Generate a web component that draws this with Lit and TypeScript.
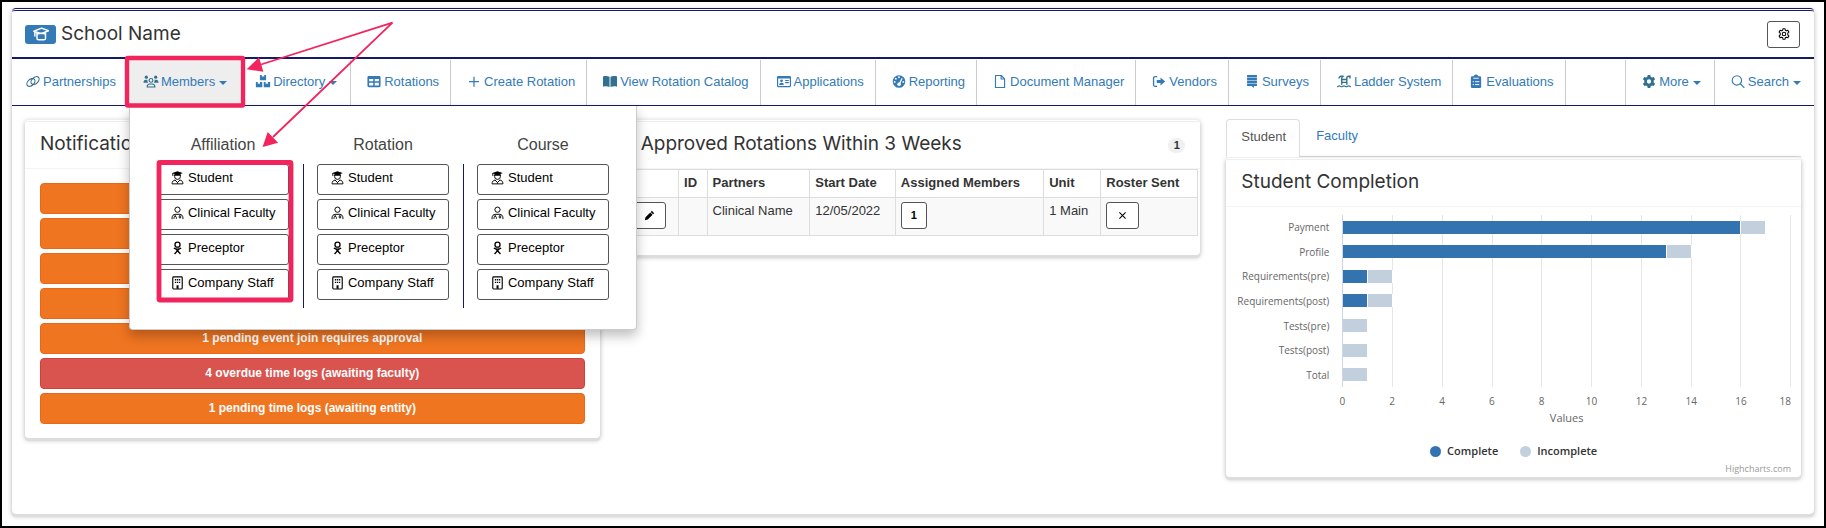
import { LitElement, html, svg, css, nothing } from "lit";
import { customElement, property, state } from "lit/decorators.js";

const icons: Record<string, unknown> = {
  link: svg`<g fill="none" stroke="currentColor" stroke-width="1.2"><ellipse cx="5.8" cy="9" rx="5" ry="3.3" transform="rotate(-42 5.8 9)"/><ellipse cx="10.2" cy="7" rx="5" ry="3.3" transform="rotate(-42 10.2 7)"/></g>`,
  members: svg`<g fill="currentColor"><circle cx="3" cy="3.4" r="1.7"/><circle cx="13" cy="3.4" r="1.7"/><path d="M0 9.2C0 7 1 6 2.6 6h1.6c-.3 1.200 0 2.300.8 3.200zM16 9.200C16 7 15 6 13.400 6h-1.600c.3 1.200 0 2.300-.8 3.200z"/></g><g fill="none" stroke="currentColor" stroke-width="1.200"><circle cx="8" cy="6.800" r="2"/><path d="M3.900 13.800c0-2 1.100-3.200 2.800-3.200h2.600c1.700 0 2.800 1.200 2.800 3.200z"/></g>`,
  boxes: svg`<path fill="currentColor" d="M4.700 1h2v2l1.300-.6L9.300 3V1h2v5.600H4.700zM.4 8.600h2v2l1.200-.6 1.200.6v-2h2.400v5.600H.4zM8.800 8.600h2v2l1.200-.6 1.200.6v-2h2.400v5.600H8.800z"/>`,
  table: svg`<path fill="currentColor" fill-rule="evenodd" d="M2.500 2h11A1.500 1.500 0 0 1 15 3.500v9a1.500 1.500 0 0 1-1.500 1.500h-11A1.500 1.500 0 0 1 1 12.500v-9A1.500 1.500 0 0 1 2.500 2zM2.800 5.200v2.600h4.400V5.200zm6 0v2.600h4.400V5.200zm-6 4.200v2.800h4.400V9.400zm6 0v2.800h4.400V9.400z"/>`,
  plus: svg`<path fill="none" stroke="currentColor" stroke-width="1.300" d="M8 3v10.500M2.700 8.200h10.600"/>`,
  book: svg`<path fill="currentColor" d="M.5 2.600C3 1.900 5.500 2 7.500 2.900v11C5.500 13 3 12.800.5 13.500zM8.500 2.900c2-.9 4.500-1 7-.3v10.900c-2.500-.7-5-.5-7 .4z"/>`,
  card: svg`<path fill="currentColor" fill-rule="evenodd" d="M2 2h12a1.500 1.500 0 0 1 1.500 1.500v9A1.500 1.500 0 0 1 14 14H2a1.500 1.500 0 0 1-1.500-1.500v-9A1.500 1.500 0 0 1 2 2zM1.800 4.800v7.900h12.400V4.800z"/><circle cx="5.300" cy="7.300" r="1.500" fill="currentColor"/><path fill="currentColor" d="M2.900 11.700c0-1.600.8-2.300 2.400-2.300s2.400.7 2.400 2.300zM9.200 6.300h3.900v1.200H9.200zM9.200 8.600h3.900v1.200H9.200z"/>`,
  gauge: svg`<circle cx="8" cy="8" r="6.700" fill="currentColor"/><g fill="#fff"><circle cx="8" cy="3.500" r="1"/><circle cx="4.600" cy="5" r="1"/><circle cx="3.400" cy="8.400" r="1"/><circle cx="12.600" cy="8.400" r="1"/><circle cx="8" cy="11" r="1.900"/><path d="M7.600 10.500 10.900 4.300l1 .5L9 11.200z"/></g>`,
  file: svg`<path fill="none" stroke="currentColor" stroke-width="1.200" stroke-linejoin="round" d="M3.200 1.600h6.200l3.500 3.500v9.300H3.200zM9.200 1.800v3.500h3.500"/>`,
  exit: svg`<path fill="none" stroke="currentColor" stroke-width="1.400" d="M6 2.700H3.800a1.600 1.600 0 0 0-1.600 1.600v7.200a1.600 1.600 0 0 0 1.600 1.600H6"/><path fill="currentColor" d="M5.600 6.400h4V3.600L14.600 8l-5 4.300V9.500h-4z"/>`,
  stack: svg`<path fill="currentColor" d="M2.800 1h10.400v2.200H2.800zM2.800 4.200h10.400v2.200H2.800zM2.800 7.400h10.400v2.200H2.800zM2.800 10.600h10.400v2.200H10v2.200l-2.500-2.200H2.800z"/><path fill="currentColor" opacity=".5" d="M2.800 1h10.400v11.800H2.800z"/>`,
  ladder: svg`<g fill="none" stroke="currentColor" stroke-width="1.500"><path d="M2.600 4.800A2.300 2.300 0 0 1 5 2.400h1.600M5.600 11.500V4.700A2.200 2.200 0 0 1 7.800 2.400M11 11.500V4.600a2.200 2.200 0 0 1 2.200-2.200h1.200v2.300M5.600 5.900H11M5.600 8.900H11"/><path stroke-width="1.200" d="M.6 13.600c1.300 0 1.300-.9 2.500-.9s1.200.9 2.400.9 1.300-.9 2.500-.9 1.200.9 2.500.9 1.200-.9 2.400-.9 1.200.9 2.500.9"/></g>`,
  clipboard: svg`<path fill="currentColor" d="M5.500 2.400A2.500 2.500 0 0 1 8 .6a2.500 2.500 0 0 1 2.500 1.800h1.700a1.300 1.300 0 0 1 1.300 1.300v10a1.300 1.300 0 0 1-1.300 1.300H3.800a1.300 1.300 0 0 1-1.300-1.300v-10a1.300 1.300 0 0 1 1.300-1.300z"/><path stroke="#fff" stroke-width="1" d="M5.200 4.500h5.600M4.500 8.200h1.300M7 8.200h4.500M4.500 11.300h1.300M7 11.300h4.500"/>`,
  gear: svg`<path fill="currentColor" fill-rule="evenodd" d="m6.600 1-.4 2-1.300.8-2-.7L1.500 5.500 3 6.900v2.200l-1.500 1.400 1.400 2.400 2-.7 1.300.8.4 2h2.800l.4-2 1.300-.8 2 .7 1.400-2.400L13 9.100V6.900l1.500-1.400-1.400-2.400-2 .7L9.800 3l-.4-2zM8 5.700a2.300 2.300 0 1 1 0 4.600 2.300 2.300 0 0 1 0-4.600z"/>`,
  gearThin: svg`<g fill="none" stroke="currentColor" stroke-width="1.400" stroke-linejoin="round"><path d="m6.600 1-.4 2-1.300.8-2-.7L1.500 5.500 3 6.900v2.200l-1.500 1.400 1.400 2.400 2-.7 1.300.8.4 2h2.800l.4-2 1.300-.8 2 .7 1.400-2.400L13 9.100V6.900l1.500-1.400-1.400-2.400-2 .7L9.800 3l-.4-2z"/><circle cx="8" cy="8" r="2.300"/></g>`,
  search: svg`<g fill="none" stroke="currentColor" stroke-width="1.200"><circle cx="6.800" cy="6.800" r="5"/><path d="m10.400 10.400 4.400 4.400"/></g>`,
  cap: svg`<g fill="none" stroke="currentColor" stroke-width="1.500" stroke-linejoin="round"><path d="M.8 5.200 8.600 2.100l6.900 2.600-7.300 2.900z"/><path d="M4 6.800v5.700c0 .9.600 1.300 1.500 1.300h5.300c1.100 0 1.700-.5 1.700-1.400V6.600M4.200 8c2.300-.9 6-.9 8.200.1M1.900 5.900v4.600"/></g>`,
  student: svg`<path fill="currentColor" d="M2 2.400 8 .4l6 2-2.500.9v2H4.500v-2l-1.300-.4v2.700h-1z"/><g fill="none" stroke="currentColor" stroke-width="1.100"><path d="M4.700 4.500v1.800a3.300 3.300 0 0 0 6.600 0V4.500M5.200 10.300C3 10.800 1.800 12 1.800 14.700h12.400c0-2.700-1.200-3.900-3.400-4.400L8 13.300zM8 13v1.500"/></g>`,
  faculty: svg`<g fill="none" stroke="currentColor" stroke-width="1.100"><circle cx="8" cy="4.200" r="3"/><path d="M1.800 15v-1.500c0-2.500 1.600-4 4-4h4.400c2.400 0 4 1.500 4 4V15M5.300 9.700v1.800M10.700 9.700v1.600M4 14.600v-1.400a1.300 1.300 0 0 1 2.700 0v1.400"/><circle cx="10.800" cy="12.600" r="1.100"/></g>`,
  preceptor: svg`<g fill="none" stroke="currentColor" stroke-width="1.500"><circle cx="8" cy="4.200" r="2.900"/><path d="M3.800 8.200c2.800 1.500 5.600 1.500 8.400 0M4.600 14.900 8 11.200l3.400 3.700M6.300 9.200 8 11.400l1.700-2.200"/></g>`,
  building: svg`<rect x="2.600" y="1" width="10.800" height="13.800" rx="1" fill="none" stroke="currentColor" stroke-width="1.300"/><path fill="currentColor" d="M5 3.500h1.500V5H5zM7.300 3.500h1.500V5H7.300zM9.600 3.500h1.500V5H9.600zM5 6.600h1.500v1.500H5zM7.300 6.600h1.500v1.500H7.300zM9.600 6.600h1.500v1.500H9.600zM6.900 10.500h2.300v4H6.900z"/>`,
  pencil: svg`<path fill="currentColor" d="m11.400 1.200 3.400 3.400-1.600 1.600-3.400-3.400zM9.100 3.500l3.400 3.400-7 7L1.200 15l1-4.500z"/>`,
  cross: svg`<path fill="none" stroke="currentColor" stroke-width="1.500" d="m3.500 3.500 9 9M12.500 3.500l-9 9"/>`,
};

const icon = (name: string, cls = "") =>
  html`<svg class="icon ${cls}" viewBox="0 0 16 16" aria-hidden="true">${icons[name]}</svg>`;

const base = css`
  * { box-sizing: border-box; }
  a { text-decoration: none; color: inherit; }
  button { font: inherit; color: inherit; background: none; border: 0; margin: 0; padding: 0; cursor: pointer; }
  h1, h2, h3 { margin: 0; font-weight: 400; }
  .icon { display: block; width: 16px; height: 16px; flex: none; }
  .btn { display: inline-flex; align-items: center; justify-content: center; border: 1px solid #555; border-radius: 3px; background: #fff; color: #000; }
`;

@customElement("members-menu")
class MembersMenu extends LitElement {
  static styles = [base, css`
    :host { display: grid; grid-template-columns: auto auto auto; background: #fff; border: 1px solid rgba(0, 0, 0, 0.2); border-top: 0; border-radius: 0 0 4px 4px; box-shadow: 0 6px 12px rgba(0, 0, 0, 0.25); padding: 28px 27px 21px; }
    h3 { width: 132px; font-size: 16px; line-height: 22px; color: #444; text-align: center; margin-bottom: 8px; }
    ul { list-style: none; margin: 0; padding: 0 0 8px; display: grid; gap: 4px; }
    .group:not(:last-child) ul { border-right: 1px solid #141a66; padding-right: 14px; margin-right: 13px; }
    .btn { width: 132px; height: 31px; justify-content: flex-start; gap: 3px; padding: 0 0 4px 12px; font-size: 13px; }
    .icon { width: 15px; height: 14px; }
  `];
  private entries = [["student", "Student"], ["faculty", "Clinical Faculty"], ["preceptor", "Preceptor"], ["building", "Company Staff"]];
  render() {
    return ["Affiliation", "Rotation", "Course"].map((group) => html`
      <section class="group">
        <h3>${group}</h3>
        <ul>${this.entries.map(([i, label]) => html`<li><a class="btn" href="#">${icon(i)}${label}</a></li>`)}</ul>
      </section>`);
  }
}

@customElement("nav-bar")
class NavBar extends LitElement {
  @state() private open = "Members";
  static styles = [base, css`
    :host { display: flex; padding-top: 1px; border-bottom: 1px solid #141a66; color: #337ab7; font-size: 13px; white-space: nowrap; }
    .item { position: relative; border-right: 1px solid #ccc; }
    .plain, .last { border-right: 0; }
    .spacer { flex: 1; border-right: 1px solid #ccc; }
    .tab { display: flex; align-items: center; height: 45px; padding: 0 11px 3px 14px; }
    .menu .tab { padding-right: 13px; }
    .plain .tab { padding-left: 12px; padding-right: 12px; }
    .plain.menu .tab { padding-left: 14px; padding-right: 13px; }
    .tab .icon { width: 18px; height: 15px; margin-right: 1px; }
    .teal { color: #31708f; }
    .open { background: #eee; }
    .caret { border: 4px solid transparent; border-top-color: currentColor; border-bottom: 0; margin: 3px 0 0 4px; }
    members-menu { position: absolute; top: 100%; left: 1px; margin-top: 1px; z-index: 2; }
  `];
  private items: [string, string, string?][] = [
    ["link", "Partnerships", "plain"], ["members", "Members", "menu plain"], ["boxes", "Directory", "menu"],
    ["table", "Rotations"], ["plus", "Create Rotation"], ["book", "View Rotation Catalog"], ["card", "Applications"],
    ["gauge", "Reporting"], ["file", "Document Manager"], ["exit", "Vendors"], ["stack", "Surveys"],
    ["ladder", "Ladder System"], ["clipboard", "Evaluations"],
  ];
  private item(name: string, label: string, cls = "") {
    const teal = ["link", "members", "book", "ladder", "gear"].includes(name) ? "teal" : "";
    const open = this.open === label;
    return html`<div class="item ${cls}">
      ${cls.includes("menu")
        ? html`<button class="tab ${open ? "open" : ""}" aria-expanded=${open} @click=${() => (this.open = open ? "" : label)}>
            ${icon(name, teal)}${label}<span class="caret"></span></button>`
        : html`<a class="tab" href="#">${icon(name, teal)}${label}</a>`}
      ${label === "Members" && open ? html`<members-menu></members-menu>` : nothing}
    </div>`;
  }
  render() {
    return html`${this.items.map((i) => this.item(...i))}<div class="spacer"></div>
      ${this.item("gear", "More", "menu")}${this.item("search", "Search", "menu last")}`;
  }
}

@customElement("panel-card")
class PanelCard extends LitElement {
  @property() heading = "";
  static styles = [base, css`
    :host { display: block; background: #fff; border-top: 3px double #eee; border-radius: 4px; box-shadow: 0 3px 0 #ddd, 0 2px 5px rgba(0, 0, 0, 0.3); }
    header { display: flex; justify-content: space-between; align-items: center; min-height: 47px; padding: 0 15px; border-bottom: 1px solid #f4f4f4; }
    h2 { font: 400 19px/24px Inter, sans-serif; color: #333; padding-bottom: 2px; }
  `];
  render() {
    return html`<header><h2>${this.heading}</h2><slot name="tools"></slot></header><slot></slot>`;
  }
}

@customElement("completion-chart")
class CompletionChart extends LitElement {
  private rows: [string, number, number][] = [
    ["Payment", 16, 1], ["Profile", 13, 1], ["Requirements(pre)", 1, 1], ["Requirements(post)", 1, 1],
    ["Tests(pre)", 0, 1], ["Tests(post)", 0, 1], ["Total", 0, 1],
  ];
  private ticks = [0, 2, 4, 6, 8, 10, 12, 14, 16, 18];
  static styles = [base, css`
    :host { display: block; padding: 8px 10px 0; font: 10px/12px "Open Sans", sans-serif; color: #666; }
    .chart { display: grid; grid-template-columns: 93px 1fr; column-gap: 13px; }
    .labels, .bars { display: grid; grid-template-rows: repeat(7, 1fr); height: 172px; align-items: center; }
    .labels { text-align: right; white-space: nowrap; }
    .plot { display: grid; }
    .bars, .lines { grid-area: 1 / 1; }
    .lines { display: grid; grid-template-columns: repeat(9, 1fr); border-left: 1px solid #ccd6eb; }
    .lines span { border-right: 1px solid #e6e6e6; }
    .bar { display: flex; height: 13px; padding-left: 1px; }
    .bar span { border-right: 1px solid #fff; background: #3273b0; }
    .bar .rest { background: #c2cfdd; }
    .axis { grid-column: 2; display: flex; justify-content: space-between; padding-top: 8px; }
    .tick { width: 0; display: flex; justify-content: center; }
    .tick:last-child { justify-content: flex-end; }
    .title { grid-column: 2; text-align: center; font-size: 11px; padding-top: 5px; }
    .legend { display: flex; justify-content: center; gap: 22px; padding-top: 20px; font-weight: 600; font-size: 11px; line-height: 14px; color: #333; }
    .key { display: flex; align-items: center; gap: 6px; }
    .dot { width: 11px; height: 11px; border-radius: 50%; background: #3273b0; }
    .dot.rest { background: #c2cfdd; }
    .credit { display: block; text-align: right; font-size: 9px; color: #999; padding: 5px 0 2px; }
  `];
  render() {
    const pct = (n: number) => `width:${(n / 18) * 100}%`;
    return html`
      <div class="chart">
        <div class="labels">${this.rows.map(([l]) => html`<span>${l}</span>`)}</div>
        <div class="plot">
          <div class="lines">${this.ticks.slice(1).map(() => html`<span></span>`)}</div>
          <div class="bars">${this.rows.map(([, a, b]) => html`<div class="bar">
            ${a ? html`<span style=${pct(a)}></span>` : nothing}<span class="rest" style=${pct(b)}></span></div>`)}</div>
        </div>
        <div class="axis">${this.ticks.map((t) => html`<span class="tick">${t}</span>`)}</div>
        <div class="title">Values</div>
      </div>
      <div class="legend"><span class="key"><i class="dot"></i>Complete</span><span class="key"><i class="dot rest"></i>Incomplete</span></div>
      <a class="credit" href="#">Highcharts.com</a>`;
  }
}

@customElement("app-root")
class AppRoot extends LitElement {
  static styles = [base, css`
    :host { display: block; position: relative; box-sizing: border-box; min-height: 100vh; border: 2px solid #000; background: #fff; padding: 6px 10px 8px; font: 13px/17px "Liberation Sans", Arial, sans-serif; color: #333; }
    .shell { border-top: 3px double #181866; border-radius: 4px; box-shadow: 0 3px 0 #ddd, 0 2px 5px rgba(0, 0, 0, 0.3); padding-bottom: 37px; }
    .top { display: flex; align-items: center; height: 48px; padding: 0 14px 0 13px; border-bottom: 2px solid #141a66; }
    .badge { display: flex; align-items: center; justify-content: center; width: 31px; height: 19px; border-radius: 3px; background: #337ab7; color: #fff; }
    h1 { flex: 1; font: 400 19px/24px Inter, sans-serif; color: #333; padding-left: 5px; }
    .settings { width: 33px; height: 27px; }
    .settings .icon { width: 12px; height: 12px; }
    .columns { display: grid; grid-template-columns: repeat(3, minmax(0, 1fr)); gap: 26px; align-items: start; padding: 13px 13px 0; }
    .alerts { display: grid; gap: 4px; padding: 14px 15px; }
    .alert { height: 31px; display: flex; align-items: center; justify-content: center; border: 1px solid #e9661a; border-radius: 4px; background: #ef7521; color: #fff; font-size: 12px; font-weight: 700; }
    .danger { background: #d9534f; border-color: #d43f3a; }
    .count { min-width: 17px; border-radius: 9px; background: #f0f0f0; font-size: 11px; font-weight: 700; line-height: 15px; text-align: center; }
    table { width: calc(100% - 3px); margin: 0 1px 19px; border-collapse: collapse; table-layout: fixed; }
    th, td { border: 1px solid #ddd; padding: 4px 5px 6px; text-align: left; vertical-align: top; }
    td { background: #f9f9f9; }
    td .btn { height: 27px; width: 33px; vertical-align: top; }
    td .num { width: 26px; font-size: 11px; font-weight: 700; }
    td .icon { width: 11px; height: 11px; }
    .c1 { width: 9%; } .c2 { width: 5%; } .c3 { width: 18%; } .c4 { width: 15%; } .c5 { width: 26%; } .c6 { width: 10%; }
    .tabs { display: flex; border-bottom: 1px solid #ddd; }
    .tab { padding: 8px 14px 12px 16px; color: #337ab7; }
    .active { padding: 8px 13px 12px 14px; border: 1px solid #ddd; border-bottom: 0; border-radius: 4px 4px 0 0; background: #fff; color: #555; margin-bottom: -1px; }
    .marks { position: absolute; top: 0; left: 0; width: 400px; height: 310px; z-index: 5; pointer-events: none; }
  `];
  private alerts = [
    "", "", "", "",
    "1 pending event join requires approval",
    "4 overdue time logs (awaiting faculty)",
    "1 pending time logs (awaiting entity)",
  ];
  render() {
    return html`
      <main class="shell">
        <header class="top">
          <span class="badge">${icon("cap")}</span>
          <h1>School Name</h1>
          <button class="btn settings" aria-label="Settings">${icon("gearThin")}</button>
        </header>
        <nav-bar></nav-bar>
        <div class="columns">
          <panel-card heading="Notifications">
            <div class="alerts">${this.alerts.map((t) => html`
              <a class="alert ${t.includes("overdue") ? "danger" : ""}" href="#">${t}</a>`)}</div>
          </panel-card>
          <panel-card heading="Approved Rotations Within 3 Weeks">
            <span slot="tools" class="count">1</span>
            <table>
              <colgroup><col class="c1" /><col class="c2" /><col class="c3" /><col class="c4" /><col class="c5" /><col class="c6" /><col /></colgroup>
              <thead><tr><th></th><th>ID</th><th>Partners</th><th>Start Date</th><th>Assigned Members</th><th>Unit</th><th>Roster Sent</th></tr></thead>
              <tbody><tr>
                <td><button class="btn" aria-label="Edit">${icon("pencil")}</button></td>
                <td></td><td>Clinical Name</td><td>12/05/2022</td>
                <td><button class="btn num">1</button></td><td>1 Main</td>
                <td><button class="btn" aria-label="Not sent">${icon("cross")}</button></td>
              </tr></tbody>
            </table>
          </panel-card>
          <section>
            <div class="tabs"><a class="active" href="#">Student</a><a class="tab" href="#">Faculty</a></div>
            <panel-card heading="Student Completion"><completion-chart></completion-chart></panel-card>
          </section>
        </div>
      </main>
      <svg class="marks" viewBox="2 2 400 310" aria-hidden="true">
        <g fill="none" stroke="#f2245e">
          <rect x="127" y="58" width="116" height="47.500" rx="1" stroke-width="4.400"/>
          <rect x="159" y="162.500" width="132" height="137.500" rx="1" stroke-width="4.800"/>
          <path stroke-width="1.800" d="M261 64.500 392.500 22.700 273 137"/>
        </g>
        <path fill="#f2245e" d="m246.700 69.300 12.300-12 4.400 14.400zM262.600 147l5.100-15 10.400 10.700z"/>
      </svg>`;
  }
}
